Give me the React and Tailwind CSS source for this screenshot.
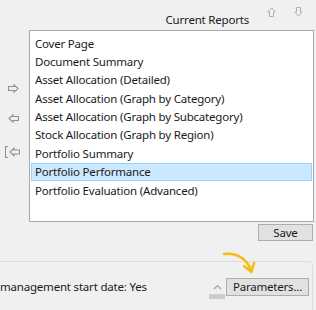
import React from "react";

const reports = [
  "Cover Page",
  "Document Summary",
  "Asset Allocation (Detailed)",
  "Asset Allocation (Graph by Category)",
  "Asset Allocation (Graph by Subcategory)",
  "Stock Allocation (Graph by Region)",
  "Portfolio Summary",
  "Portfolio Performance",
  "Portfolio Evaluation (Advanced)",
];

const ArrowRight = () => (
  <svg width="11" height="9" viewBox="0 0 11 9" fill="none" stroke="#8f8f8f" strokeWidth="1.1">
    <path d="M0.5 2.5 H6 V0.8 L10 4.5 L6 8.2 V6.5 H0.5 Z" />
  </svg>
);

const ArrowLeft = () => (
  <svg width="11" height="9" viewBox="0 0 11 9" fill="none" stroke="#8f8f8f" strokeWidth="1.1">
    <path d="M10.5 2.5 H5 V0.8 L1 4.5 L5 8.2 V6.5 H10.5 Z" />
  </svg>
);

const ArrowFirst = () => (
  <svg width="15" height="12" viewBox="0 0 15 12" fill="none" stroke="#8f8f8f" strokeWidth="1.1">
    <path d="M3 0.5 H0.5 V11.5 H3" />
    <path d="M14.5 4 H9 V2.3 L5 6 L9 9.7 V8 H14.5 Z" />
  </svg>
);

const ArrowUp = () => (
  <svg width="9" height="10" viewBox="0 0 9 10" fill="none" stroke="#b0b0b0" strokeWidth="1">
    <path d="M2.5 9.5 V5 H0.8 L4.5 0.8 L8.2 5 H6.5 V9.5 Z" />
  </svg>
);

const ArrowDown = () => (
  <svg width="9" height="10" viewBox="0 0 9 10" fill="none" stroke="#b0b0b0" strokeWidth="1">
    <path d="M2.5 0.5 V5 H0.8 L4.5 9.2 L8.2 5 H6.5 V0.5 Z" />
  </svg>
);

const App = () => {
  return (
    <div
      className="relative w-[316px] h-[310px] overflow-hidden bg-[#f0f0f0] text-[11.5px] tracking-[-0.2px] text-[#1a1a1a]"
      style={{ fontFamily: '"Noto Sans", "Open Sans", sans-serif' }}
    >
      {/* header */}
      <div className="h-[30px] flex items-center justify-end pr-[13px]">
        <span className="mt-[10px] leading-none">Current Reports</span>
        <div className="ml-[18px] mb-[6px]">
          <ArrowUp />
        </div>
        <div className="ml-[18px] mb-[6px]">
          <ArrowDown />
        </div>
      </div>

      {/* list row */}
      <div className="flex">
        <div className="w-[29px] flex flex-col items-center pt-[54px]">
          <div className="ml-[-3px]">
            <ArrowRight />
          </div>
          <div className="mt-[21px] ml-[-3px]">
            <ArrowLeft />
          </div>
          <div className="mt-[23px] ml-[-4px]">
            <ArrowFirst />
          </div>
        </div>
        <div className="w-[285px] h-[192px] bg-white border border-[#a9a9a9] px-px pt-[3px]">
          {reports.map((r, i) => (
            <div
              key={r}
              className={`h-[18.375px] flex items-center pl-[3px] whitespace-nowrap border ${
                i === 7 ? "bg-[#cce8ff] border-[#99d1ff]" : "border-transparent"
              }`}
            >
              {r}
            </div>
          ))}
        </div>
      </div>

      {/* save */}
      <div className="flex justify-end pr-[3px] mt-[2px]">
        <button className="w-[55px] h-[17px] bg-[#e1e1e1] border border-[#adadad] flex items-center justify-center leading-none">
          Save
        </button>
      </div>

      {/* group box */}
      <div className="mt-[20px] ml-[-10px] mr-[3px] h-[80px] border-t border-r border-[#dcdcdc] rounded-tr-[4px] pl-[10px]">
        <div className="flex items-center mt-[16px]">
          <span className="whitespace-nowrap">management start date: Yes</span>
          <div className="ml-auto flex items-center">
            <div className="flex flex-col items-center w-[16px] mr-[1px]">
              <svg width="9" height="6" viewBox="0 0 9 6" fill="none" stroke="#a0a0a0" strokeWidth="1.2">
                <path d="M1 5 L4.5 1.5 L8 5" />
              </svg>
              <div className="w-[16px] h-[5px] bg-[#cdcdcd] mt-[4px] mb-[-9px]" />
            </div>
            <button className="w-[83px] h-[18px] bg-[#e1e1e1] border border-[#adadad] flex items-center justify-center leading-none mr-[3px]">
              Parameters...
            </button>
          </div>
        </div>
      </div>

      {/* annotation arrow */}
      <svg
        className="absolute left-[220px] top-[250px]"
        width="40"
        height="28"
        viewBox="0 0 40 28"
        fill="none"
        stroke="#f5bd0f"
        strokeWidth="2.5"
        strokeLinecap="round"
        strokeLinejoin="round"
      >
        <path d="M4 4 C16 3 26 8 31 20" />
        <path d="M24 16 L31.5 22 L34 13" />
      </svg>
    </div>
  );
};

export default App;
